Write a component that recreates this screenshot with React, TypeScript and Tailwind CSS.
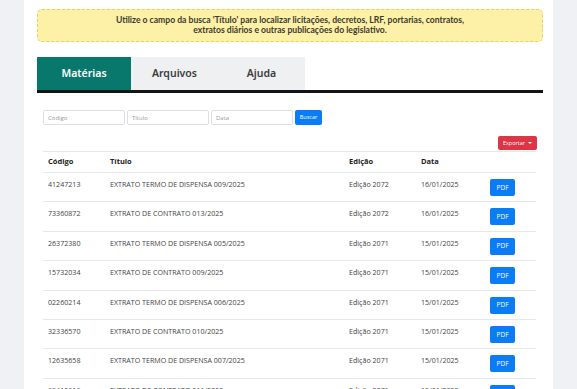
import { useState } from 'react'

const rows = [
  { codigo: '41247213', titulo: 'EXTRATO TERMO DE DISPENSA 009/2025', edicao: 'Edição 2072', data: '16/01/2025' },
  { codigo: '73360872', titulo: 'EXTRATO DE CONTRATO 013/2025', edicao: 'Edição 2072', data: '16/01/2025' },
  { codigo: '26372380', titulo: 'EXTRATO TERMO DE DISPENSA 005/2025', edicao: 'Edição 2071', data: '15/01/2025' },
  { codigo: '15732034', titulo: 'EXTRATO DE CONTRATO 009/2025', edicao: 'Edição 2071', data: '15/01/2025' },
  { codigo: '02260214', titulo: 'EXTRATO TERMO DE DISPENSA 006/2025', edicao: 'Edição 2071', data: '15/01/2025' },
  { codigo: '32336570', titulo: 'EXTRATO DE CONTRATO 010/2025', edicao: 'Edição 2071', data: '15/01/2025' },
  { codigo: '12635658', titulo: 'EXTRATO TERMO DE DISPENSA 007/2025', edicao: 'Edição 2071', data: '15/01/2025' },
  { codigo: '69415616', titulo: 'EXTRATO DE CONTRATO 011/2025', edicao: 'Edição 2071', data: '15/01/2025' },
]

export default function App() {
  const [tab, setTab] = useState('materias')
  const tabs = [
    { id: 'materias', label: 'Matérias' },
    { id: 'arquivos', label: 'Arquivos' },
    { id: 'ajuda', label: 'Ajuda' },
  ]

  return (
    <div className="h-[389px] overflow-hidden bg-[#eff1f4] px-[24px] font-['Open_Sans',sans-serif]">
      <div className="h-full bg-white pl-[13px] pr-[10px] pt-[9px]">
        {/* Notice */}
        <div className="h-[33px] rounded-[5px] border border-dashed border-[#e9cf6a] bg-[#fdf0a7] flex flex-col items-center justify-center font-['Lato',sans-serif] text-[8.6px] font-bold leading-[9.5px] text-[#3b3a30]">
          <p>Utilize o campo da busca 'Título' para localizar licitações, decretos, LRF, portarias, contratos,</p>
          <p>extratos diários e outras publicações do legislativo.</p>
        </div>

        {/* Tabs */}
        <div className="mt-[15px] flex border-b-[3px] border-[#141414]">
          {tabs.map((t) => (
            <button
              key={t.id}
              onClick={() => setTab(t.id)}
              className={`h-[33px] font-['Noto_Sans',sans-serif] text-[10.5px] font-semibold ${
                t.id === 'materias' ? 'w-[94px] bg-[#08786d] text-white' : 'w-[87px] bg-[#eff0f2] text-[#3c3c3c]'
              } ${t.id === tab ? '' : ''}`}
            >
              {t.label}
            </button>
          ))}
        </div>

        {/* Search */}
        <div className="mt-[17px] ml-[6px] flex gap-[2px]">
          <input placeholder="Código" className="h-[15px] w-[82px] rounded-[2px] border border-[#dcdfe3] px-[4px] text-[6px] text-[#555] placeholder:text-[#9a9a9a] outline-none" />
          <input placeholder="Título" className="h-[15px] w-[82px] rounded-[2px] border border-[#dcdfe3] px-[4px] text-[6px] text-[#555] placeholder:text-[#9a9a9a] outline-none" />
          <input placeholder="Data" className="h-[15px] w-[82px] rounded-[2px] border border-[#dcdfe3] px-[4px] text-[6px] text-[#555] placeholder:text-[#9a9a9a] outline-none" />
          <button className="h-[15px] w-[27px] rounded-[2px] bg-[#0a7cf6] text-[5.5px] text-white">Buscar</button>
        </div>

        {/* Export */}
        <div className="mt-[11px] flex justify-end pr-[6px]">
          <button className="h-[14px] w-[39px] rounded-[2px] bg-[#dc3545] text-[5.5px] text-white flex items-center justify-center gap-[3px]">
            Exportar
            <span className="inline-block h-0 w-0 border-x-[2px] border-t-[2px] border-x-transparent border-t-white" />
          </button>
        </div>

        {/* Table */}
        <table className="ml-[6px] mt-[1px] w-[493px] table-fixed border-collapse text-left text-[7.1px] text-[#444]">
          <thead>
            <tr className="h-[21px] border-t border-b border-[#e5e7ea] text-[7.5px]">
              <th className="w-[67px] pl-[5px] font-bold text-[#222]">Código</th>
              <th className="w-[239px] font-bold text-[#222]">Título</th>
              <th className="w-[72px] font-bold text-[#222]">Edição</th>
              <th className="w-[69px] font-bold text-[#222]">Data</th>
              <th></th>
            </tr>
          </thead>
          <tbody>
            {rows.map((r) => (
              <tr key={r.codigo} className="h-[29.4px] border-b border-[#e5e7ea]">
                <td className="pl-[5px] align-top pt-[6px]">{r.codigo}</td>
                <td className="align-top pt-[6px]">{r.titulo}</td>
                <td className="align-top pt-[6px]">{r.edicao}</td>
                <td className="align-top pt-[6px]">{r.data}</td>
                <td className="align-top pt-[6px]">
                  <button className="h-[17px] w-[25px] rounded-[2px] bg-[#0a7cf6] text-[6.5px] text-white">PDF</button>
                </td>
              </tr>
            ))}
          </tbody>
        </table>
      </div>
    </div>
  )
}
